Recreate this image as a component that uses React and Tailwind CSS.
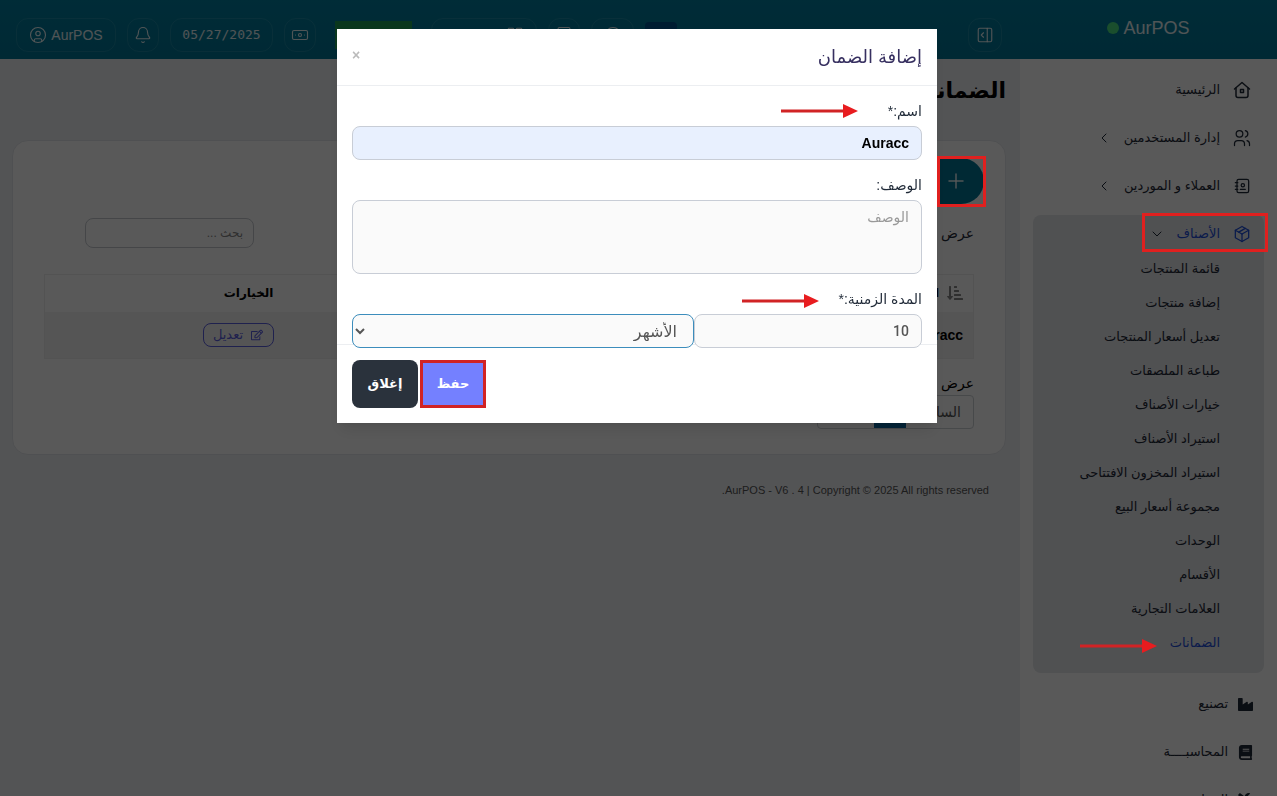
import { useState } from 'react'
import { Banknote, Bell, Calculator, ChevronDown, ChevronLeft, CircleUser, CircleHelp, LayoutGrid, PanelRightOpen, Plus } from 'lucide-react'
import { TbAddressBook, TbPackage, TbUsers } from 'react-icons/tb'
import { FaBook, FaIndustry, FaRegEdit, FaSortAmountDownAlt, FaTools } from 'react-icons/fa'

const SUB_ITEMS = [
  'قائمة المنتجات',
  'إضافة منتجات',
  'تعديل أسعار المنتجات',
  'طباعة الملصقات',
  'خيارات الأصناف',
  'استيراد الأصناف',
  'استيراد المخزون الافتتاحى',
  'مجموعة أسعار البيع',
  'الوحدات',
  'الأقسام',
  'العلامات التجارية',
  'الضمانات'
]

function HomeIcon() {
  return (
    <svg viewBox="0 0 20 20" className="w-5 h-5" fill="none" stroke="currentColor" strokeWidth="1.5" strokeLinecap="round" strokeLinejoin="round">
      <path d="M2.500 9 10 2.500 17.500 9" />
      <path d="M4 8v7.500a2 2 0 0 0 2 2h8a2 2 0 0 0 2-2V8" />
      <rect x="8.500" y="9.500" width="3" height="3" />
    </svg>
  )
}

// red pointer arrow
function Arrow({ className }) {
  return (
    <svg viewBox="0 0 77 16" className={`absolute w-[77px] h-4 ${className}`}>
      <path d="M0 8h64" stroke="#d12325" strokeWidth="3" />
      <path d="M62 1l15 7-15 7z" fill="#e81c1f" />
    </svg>
  )
}

function NavItem({ icon, label, chevron }) {
  return (
    <a href="#" className="flex items-center h-12 px-3 text-[#1f2937]">
      <span className="flex w-5 justify-center shrink-0">{icon}</span>
      <span className="ms-3">{label}</span>
      {chevron && <ChevronLeft className="w-4 h-4 ms-3" strokeWidth={1.5} />}
    </a>
  )
}

// items with a solid glyph sit a little closer to the edge
function SolidNavItem({ icon, label }) {
  return (
    <a href="#" className="flex items-center gap-2.5 h-12 px-[11px] text-[#1f2937]">
      {icon}
      <span>{label}</span>
    </a>
  )
}

function HeaderButton({ className, children, ...rest }) {
  return (
    <button className={`flex items-center justify-center gap-2 h-[34px] rounded-xl border border-white/10 text-white/90 ${className}`} {...rest}>
      {children}
    </button>
  )
}

function Header() {
  return (
    <header className="flex h-[59px] shrink-0 bg-linear-to-b from-[#007e9f] to-[#007595] text-white/90">
      <div dir="ltr" className="flex w-[257px] shrink-0 justify-center pt-4 text-lg leading-6">
        <span className="flex items-center gap-1 h-6">
          <span className="w-3 h-3 rounded-full bg-[#4ade80]" />
          AurPOS
        </span>
      </div>
      <div className="flex flex-1 items-start justify-between ps-[18px] pe-4 pt-[18px]">
        <HeaderButton className="w-[34px]" aria-label="القائمة">
          <PanelRightOpen className="w-[18px] h-[18px]" strokeWidth={1.5} />
        </HeaderButton>
        <div dir="ltr" className="flex gap-[11px]">
          <HeaderButton className="w-[100px]">
            <CircleUser className="w-[18px] h-[18px]" strokeWidth={1.5} />
            <span className="text-sm -ms-1">AurPOS</span>
          </HeaderButton>
          <HeaderButton className="w-8" aria-label="الإشعارات">
            <Bell className="w-[18px] h-[18px]" strokeWidth={1.5} />
          </HeaderButton>
          <HeaderButton className="w-[103px] font-['DejaVu_Sans_Mono',monospace] text-[13px]">05/27/2025</HeaderButton>
          <HeaderButton className="w-8" aria-label="الخزينة">
            <Banknote className="w-[18px] h-[18px]" strokeWidth={1.5} />
          </HeaderButton>
          <button className="ms-2 mt-[3px] w-[77px] h-7 bg-[#1f9d55]" aria-label="إضافة" />
          <HeaderButton className="ms-2 w-[106px] justify-end pe-3" aria-label="نقطة البيع">
            <LayoutGrid className="w-[18px] h-[18px]" strokeWidth={1.5} />
          </HeaderButton>
          <HeaderButton className="w-8" aria-label="الآلة الحاسبة">
            <Calculator className="w-[18px] h-[18px]" strokeWidth={1.5} />
          </HeaderButton>
          <HeaderButton className="w-[43px]" aria-label="مساعدة">
            <CircleHelp className="w-[18px] h-[18px]" strokeWidth={1.5} />
          </HeaderButton>
          <button className="mt-1 w-8 h-6 rounded bg-[#00508c]" aria-label="اللغة" />
        </div>
      </div>
    </header>
  )
}

function Sidebar() {
  return (
    <aside className="w-[257px] shrink-0 bg-white px-[13px] pt-[7px] text-[13px]">
      <NavItem icon={<HomeIcon />} label="الرئيسية" />
      <NavItem icon={<TbUsers className="w-5 h-5" strokeWidth={1.5} />} label="إدارة المستخدمين" chevron />
      <NavItem icon={<TbAddressBook className="w-5 h-5" strokeWidth={1.5} />} label="العملاء و الموردين" chevron />
      <div className="mt-[5px] mb-[7px] pb-[13px] rounded-lg bg-[#e5e7eb]">
        <a href="#" className="relative flex items-center h-[37px] px-3 text-[#1d4ed8]">
          <TbPackage className="w-5 h-5" strokeWidth={1.5} />
          <span className="ms-3">الأصناف</span>
          <ChevronDown className="w-4 h-4 ms-3 text-[#1f2937]" strokeWidth={1.5} />
          <span className="absolute -right-1 -top-0.5 z-50 w-[126px] h-[39px] border-3 border-[#e0201f]" />
        </a>
        {SUB_ITEMS.map(item => (
          <a
            key={item}
            href="#"
            className={item === 'الضمانات' ? 'relative flex items-center h-[34px] ps-11 text-[#1d4ed8]' : 'flex items-center h-[34px] ps-11 text-[#1f2937]'}
          >
            {item}
            {item === 'الضمانات' && <Arrow className="right-[107px] top-3 z-50" />}
          </a>
        ))}
      </div>
      <SolidNavItem icon={<FaIndustry className="w-[15px] h-[15px]" />} label="تصنيع" />
      <SolidNavItem icon={<FaBook className="w-[15px] h-[15px]" />} label="المحاسبــــة" />
      <SolidNavItem icon={<FaTools className="w-[15px] h-[15px]" />} label="الصيانة" />
    </aside>
  )
}

function Content() {
  return (
    <main className="flex-1 min-w-0 ps-3.5 pe-3">
      <h1 className="pt-4 h-[81px] text-[22px] leading-8 font-bold text-black">الضمانات</h1>
      <section className="h-[315px] rounded-2xl border border-[#e3e6ea] bg-white px-[31px] pt-[17px]">
        <div className="relative flex h-[46px] -mx-2.5">
          <button className="flex items-center justify-start w-28 h-[46px] ps-4 rounded-full bg-[#007595] text-white/90" aria-label="إضافة">
            <Plus className="w-6 h-6" strokeWidth={1.5} />
          </button>
          <span className="absolute -right-0.5 -top-0.5 z-50 w-[49px] h-[51px] border-3 border-[#e0201f]" />
        </div>
        <div className="flex items-center justify-between mt-3.5 h-[30px] text-sm text-[#1f2937]">
          <label className="flex items-center gap-1.5">
            عرض
            <select className="w-16 h-[26px] border border-[#c8ccd2] rounded">
              <option>25</option>
            </select>
          </label>
          <input aria-label="بحث" placeholder="بحث ..." className="w-[169px] h-[30px] me-[41px] px-2.5 rounded-lg border border-[#c5c9cf] text-xs placeholder:text-[#888]" />
        </div>
        <table className="mt-[26px] w-full table-fixed border border-[#eeeeee] text-xs text-black">
          <thead>
            <tr className="h-[37px]">
              <th className="px-2.5 text-start font-bold">
                <span className="flex items-center gap-2"><FaSortAmountDownAlt className="w-4 h-4 text-[#888]" /> اسم</span>
              </th>
              <th className="px-2.5 text-start font-bold">الوصف</th>
              <th className="px-2.5 text-start font-bold">المدة الزمنية</th>
              <th className="w-[239px] px-2.5 text-start font-bold">الخيارات</th>
            </tr>
          </thead>
          <tbody>
            <tr className="h-[47px] bg-[#f4f4f4]">
              <td className="px-2.5 text-sm font-bold">Auracc</td>
              <td className="px-2.5" />
              <td className="px-2.5">10 الأشهر</td>
              <td className="px-2.5">
                <button className="flex items-center justify-center gap-2 w-[71px] h-6 rounded-lg border border-[#5b5fe0] text-[13px] text-[#5b5fe0]">
                  <FaRegEdit className="w-3 h-3" /> تعديل
                </button>
              </td>
            </tr>
          </tbody>
        </table>
        <p className="mt-3 h-6 leading-6 text-sm font-medium text-black">عرض 1 إلى 1 من 1</p>
        <div className="flex w-fit h-[34px] rounded border border-[#ccd0d5] text-sm text-[#555]">
          <button className="w-[67px] ps-3 text-start">السابق</button>
          <button className="w-8 bg-[#0a69a0] text-white">1</button>
          <button className="w-14">التالى</button>
        </div>
      </section>
      <footer className="mt-[27px] ps-[17px] text-[11px] leading-4 text-[#555]">AurPOS - V6 . 4 | Copyright © 2025 All rights reserved.</footer>
    </main>
  )
}

function WarrantyModal({ onClose }) {
  const [name, setName] = useState('Auracc')
  const [duration, setDuration] = useState('10')

  return (
    <div className="fixed inset-0 z-40 flex items-start justify-center pt-[29px] pr-[3px] bg-black/65">
      <form className="w-[600px] max-w-full bg-white shadow-lg" onSubmit={e => e.preventDefault()}>
        <div className="flex items-center justify-between h-[57px] px-[15px] border-b border-[#eceef1]">
          <h2 className="text-lg leading-6 font-medium text-[#373060]">إضافة الضمان</h2>
          <button type="button" onClick={onClose} aria-label="إغلاق" className="flex w-2 justify-center pb-1 text-sm font-bold text-[#bbb]">×</button>
        </div>

        <div className="px-[15px] pt-[15px] text-sm text-[#1f2937]">
          <div className="relative mb-[15px]">
            <label htmlFor="name" className="block h-[25px] leading-5">اسم:*</label>
            <input
              id="name"
              value={name}
              onChange={e => setName(e.target.value)}
              className="block w-full h-[34px] px-3 rounded-lg border border-[#c8cdd6] bg-[#e8f0fe] text-sm font-bold text-black"
            />
            <Arrow className="right-16 top-0.5" />
          </div>

          <div className="mb-[15px]">
            <label htmlFor="desc" className="block h-[25px] leading-5">الوصف:</label>
            <textarea
              id="desc"
              placeholder="الوصف"
              className="block w-full h-[74px] px-3 py-1.5 rounded-lg border border-[#c8cdd6] bg-[#fafafa] resize-none placeholder:text-[#999]"
            />
          </div>

          <div className="relative">
            <label htmlFor="duration" className="block h-[25px] leading-5">المدة الزمنية:*</label>
            <div className="relative z-10 flex">
              <input
                id="duration"
                value={duration}
                onChange={e => setDuration(e.target.value)}
                className="w-2/5 h-[34px] px-3 rounded-lg border border-[#c8cdd6] bg-[#fafafa] font-['Roboto',sans-serif] font-medium text-[#555]"
              />
              <select aria-label="وحدة المدة" className="w-3/5 h-[34px] px-3 rounded-lg border border-[#3c8dbc] bg-[#fafafa] text-base text-[#555]">
                <option>الأشهر</option>
                <option>الأيام</option>
                <option>السنوات</option>
              </select>
            </div>
            <Arrow className="right-[103px] top-1" />
          </div>
        </div>

        <div className="flex justify-end gap-0.5 -mt-1 p-[15px] border-t border-[#eceef1] text-[13px] font-bold text-white">
          <button type="submit" className="relative w-[66px] h-12 rounded-lg bg-[#7480ff]">
            حفظ
            <span className="absolute inset-0 border-3 border-[#d12325]" />
          </button>
          <button type="button" onClick={onClose} className="w-[66px] h-12 rounded-lg bg-[#2a323c]">إغلاق</button>
        </div>
      </form>
    </div>
  )
}

export default function App() {
  const [open, setOpen] = useState(true)

  return (
    <div dir="rtl" className="h-screen overflow-hidden flex flex-col bg-[#eef0f4] font-['Liberation_Sans','DejaVu_Sans',sans-serif]">
      <Header />
      <div className="flex flex-1">
        <Sidebar />
        <Content />
      </div>
      {open && <WarrantyModal onClose={() => setOpen(false)} />}
    </div>
  )
}
